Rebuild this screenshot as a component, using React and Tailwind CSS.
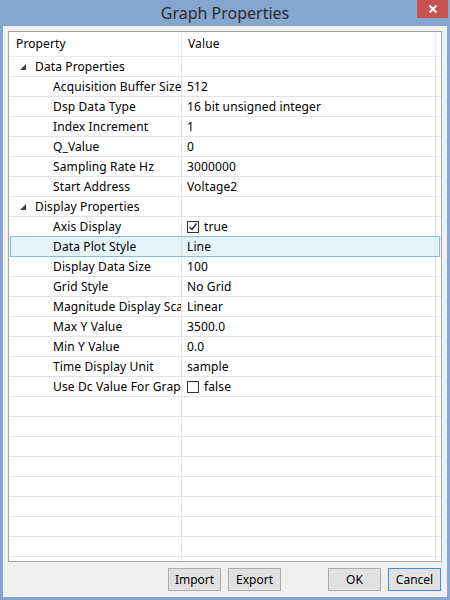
import React from 'react'

const groups = [
  {
    name: 'Data Properties',
    items: [
      ['Acquisition Buffer Size', '512'],
      ['Dsp Data Type', '16 bit unsigned integer'],
      ['Index Increment', '1'],
      ['Q_Value', '0'],
      ['Sampling Rate Hz', '3000000'],
      ['Start Address', 'Voltage2'],
    ],
  },
  {
    name: 'Display Properties',
    items: [
      ['Axis Display', true],
      ['Data Plot Style', 'Line'],
      ['Display Data Size', '100'],
      ['Grid Style', 'No Grid'],
      ['Magnitude Display Scale', 'Linear'],
      ['Max Y Value', '3500.0'],
      ['Min Y Value', '0.0'],
      ['Time Display Unit', 'sample'],
      ['Use Dc Value For Graph', false],
    ],
  },
]

const SELECTED = 'Data Plot Style'

function Expander(){
  return (
    <svg width="6" height="6" viewBox="0 0 6 6" className="block">
      <polygon points="6,0 6,6 0,6" fill="#404040" />
    </svg>
  )
}

function Check({ on }){
  return (
    <span className="w-[12px] h-[12px] border border-[#333] bg-white flex items-center justify-center mr-[5px]">
      {on && (
        <svg width="10" height="10" viewBox="0 0 10 10">
          <path d="M1.5 5 L4 7.5 L8.5 1.5" fill="none" stroke="#222" strokeWidth="1.4" />
        </svg>
      )}
    </span>
  )
}

function Row({ left, value, selected }){
  return (
    <div className={'relative flex h-[20px] border-b border-[#e3e3e3] ' + (selected ? 'bg-[#e5f3fb]' : '')}>
      <div className="w-[173px] shrink-0 border-r border-[#e3e3e3] overflow-hidden whitespace-nowrap flex items-center">{left}</div>
      <div className="w-[254px] shrink-0 border-r border-[#e3e3e3] pl-[5px] flex items-center whitespace-nowrap">{value}</div>
      <div className="flex-1" />
      {selected && <div className="pointer-events-none absolute -top-px -bottom-px left-px right-px border border-[#84bde8]" />}
    </div>
  )
}

export default function App(){
  const rows = []
  groups.forEach(g => {
    rows.push(
      <Row key={g.name} left={
        <div className="flex items-center">
          <span className="ml-[11px] mr-[9px]"><Expander /></span>
          <span>{g.name}</span>
        </div>
      } value={null} />
    )
    g.items.forEach(([k, v]) => {
      let val = v
      if(typeof v === 'boolean') val = <span className="flex items-center"><Check on={v} />{v ? 'true' : 'false'}</span>
      rows.push(<Row key={k} selected={k === SELECTED} left={<span className="pl-[44px]">{k}</span>} value={val} />)
    })
  })
  const empty = Array.from({ length: 10 })

  return (
    <div className="w-[450px] h-[600px] bg-[#87a6cf] flex flex-col text-[12px] text-black" style={{ fontFamily: '"Noto Sans", "Open Sans", sans-serif' }}>
      <div className="relative h-[26px] shrink-0 flex items-center justify-center">
        <span className="text-[16px] text-[#2b2b2b] leading-none">Graph Properties</span>
        <div className="absolute top-0 left-[417px] w-[31px] h-[18px] bg-[#c75050] flex items-center justify-center">
          <svg width="10" height="10" viewBox="0 0 10 10">
            <path d="M1.5 1.5 L8.5 8.5 M8.5 1.5 L1.5 8.5" stroke="#fff" strokeWidth="2" />
          </svg>
        </div>
      </div>
      <div className="flex-1 mx-[3px] mb-[3px] bg-[#f0f0f0] flex flex-col pt-[5px] pl-[5px]">
        <div className="w-[434px] h-[531px] border border-[#a7a7a7] bg-white overflow-hidden tracking-[0.12px]">
          <div className="flex h-[25px] border-b border-[#e5ebf3]">
            <div className="w-[173px] shrink-0 border-r border-[#e5ebf3] pl-[7px] flex items-center">Property</div>
            <div className="w-[254px] shrink-0 border-r border-[#e5ebf3] pl-[6px] flex items-center">Value</div>
            <div className="flex-1" />
          </div>
          {rows}
          {empty.map((_, i) => <Row key={'e' + i} left={null} value={null} />)}
        </div>
        <div className="flex mt-[6px] h-[23px]">
          <button className="ml-[160px] w-[53px] h-[23px] bg-[#e1e1e1] border border-[#adadad]">Import</button>
          <button className="ml-[7px] w-[53px] h-[23px] bg-[#e1e1e1] border border-[#adadad]">Export</button>
          <button className="ml-[47px] w-[53px] h-[23px] bg-[#e1e1e1] border border-[#adadad]">OK</button>
          <button className="ml-[7px] w-[53px] h-[23px] bg-[#e1e1e1] border border-[#3c8fe0]">Cancel</button>
        </div>
      </div>
    </div>
  )
}
